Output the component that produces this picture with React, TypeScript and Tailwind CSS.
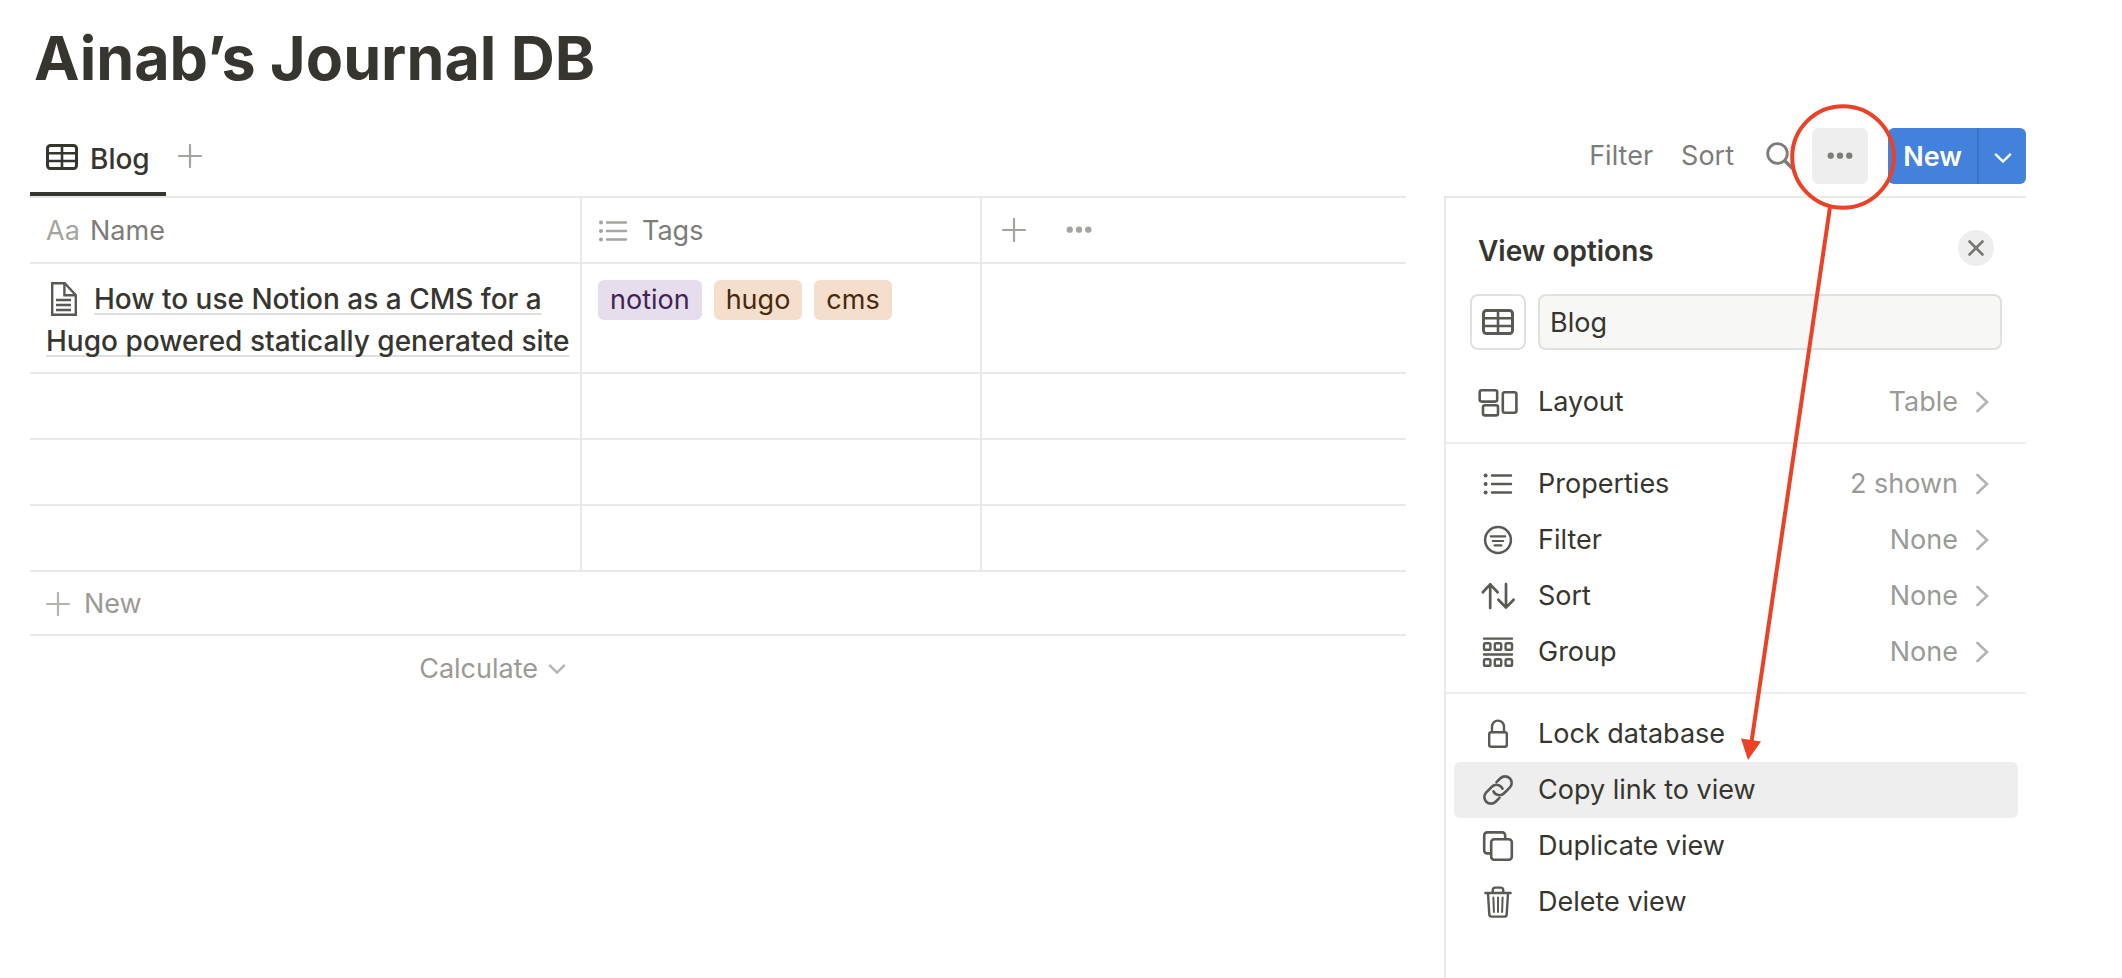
import type { ReactNode } from "react";

type IconProps = { className?: string };

const TableIcon = ({ className = "" }: IconProps) => (
  <svg width="32" height="26" viewBox="0 0 32 26" fill="none" stroke="currentColor" strokeWidth="3" className={`shrink-0 ${className}`} aria-hidden="true">
    <rect x="1.5" y="1.5" width="29" height="23" rx="3" />
    <path d="M1.5 9.3h29M1.5 17h29M16 1.5v23" strokeWidth="2.6" />
  </svg>
);

const PlusIcon = ({ className = "" }: IconProps) => (
  <svg width="24" height="24" viewBox="0 0 24 24" fill="none" stroke="currentColor" strokeWidth="2.2" strokeLinecap="round" className={`shrink-0 ${className}`} aria-hidden="true">
    <path d="M12 1v22M1 12h22" />
  </svg>
);

const ListIcon = ({ className = "" }: IconProps) => (
  <svg width="30" height="22" viewBox="0 0 30 22" fill="none" stroke="currentColor" strokeWidth="2.4" strokeLinecap="round" className={`shrink-0 ${className}`} aria-hidden="true">
    <path d="M9 2.5h19M9 11h19M9 19.5h19" />
    <g fill="currentColor" stroke="none">
      <circle cx="3" cy="2.5" r="2" />
      <circle cx="3" cy="11" r="2" />
      <circle cx="3" cy="19.5" r="2" />
    </g>
  </svg>
);

const DotsIcon = ({ className = "w-[26px]" }: IconProps) => (
  <svg viewBox="0 0 28 8" fill="currentColor" className={`shrink-0 ${className}`} aria-hidden="true">
    <circle cx="4" cy="4" r="3.4" />
    <circle cx="14" cy="4" r="3.4" />
    <circle cx="24" cy="4" r="3.4" />
  </svg>
);

const PageIcon = () => (
  <svg width="28" height="34" viewBox="0 0 28 34" fill="none" stroke="currentColor" strokeWidth="2.4" className="mr-4 ml-1 inline-block align-[-7px] text-[#5a5954]" aria-hidden="true">
    <path d="M2.2 1.2h12.6l11 12v19.6h-23.6z" />
    <path d="M14.4 1.2v12h11.4" />
    <path d="M6 18h15M6 23h15M6 28h15" />
  </svg>
);

const SearchIcon = () => (
  <svg width="30" height="28" viewBox="0 0 30 28" fill="none" stroke="currentColor" strokeWidth="2.8" className="shrink-0" aria-hidden="true">
    <circle cx="11.5" cy="11.5" r="9.8" />
    <path d="M18.5 18.5l8 8" strokeWidth="3.6" />
  </svg>
);

const ChevronDown = ({ className = "" }: IconProps) => (
  <svg width="18" height="12" viewBox="0 0 18 12" fill="none" stroke="currentColor" strokeWidth="2.4" className={`shrink-0 ${className}`} aria-hidden="true">
    <path d="M1.2 1.8L9 9.6l7.8-7.8" />
  </svg>
);

const ChevronRight = () => (
  <svg width="14" height="22" viewBox="0 0 14 22" fill="none" stroke="currentColor" strokeWidth="2.6" strokeLinecap="round" className="shrink-0 text-[#b4b3b0]" aria-hidden="true">
    <path d="M1.5 2l9.5 9-9.5 9" />
  </svg>
);

const CloseIcon = () => (
  <svg width="16" height="16" viewBox="0 0 16 16" fill="none" stroke="currentColor" strokeWidth="2.6" strokeLinecap="round" aria-hidden="true">
    <path d="M1.5 1.5l13 13M14.5 1.5l-13 13" />
  </svg>
);

const Glyph = ({ children }: { children: ReactNode }) => (
  <svg width="40" height="40" viewBox="0 0 40 40" fill="none" stroke="currentColor" strokeWidth="2.4" strokeLinecap="round" strokeLinejoin="round" className="shrink-0 text-[#5a5954]" aria-hidden="true">
    {children}
  </svg>
);

const glyphs = {
  layout: (
    <Glyph>
      <rect x="1.7" y="8.2" width="17.5" height="11.4" rx="2" strokeWidth="2.6" />
      <rect x="5" y="23.2" width="15" height="10.2" rx="2" strokeWidth="2.6" />
      <rect x="24.8" y="10.2" width="13.6" height="20.6" rx="2" strokeWidth="2.6" />
    </Glyph>
  ),
  properties: (
    <Glyph>
      <path d="M14 11.5h19M14 20h19M14 28.5h19" />
      <g fill="currentColor" stroke="none">
        <circle cx="7.6" cy="11.5" r="2" />
        <circle cx="7.6" cy="20" r="2" />
        <circle cx="7.6" cy="28.5" r="2" />
      </g>
    </Glyph>
  ),
  filter: (
    <Glyph>
      <circle cx="20" cy="20" r="12.9" strokeWidth="2.5" />
      <path d="M12.8 16.4h14.4M14.8 21h10.4M16.6 25.4h6.8" strokeWidth="2.1" />
    </Glyph>
  ),
  sort: (
    <Glyph>
      <path d="M12.2 32V8.4M4.8 16.2l7.4-7.8 7.4 7.8M28 8v23.6M20.4 23.8l7.6 7.8 7.6-7.8" strokeWidth="2.7" />
    </Glyph>
  ),
  group: (
    <Glyph>
      <path d="M6 6.6h28M6 22.5h28" />
      <rect x="6" y="11.2" width="6.4" height="6.6" rx="1.4" />
      <rect x="16.8" y="11.2" width="6.4" height="6.6" rx="1.4" />
      <rect x="27.6" y="11.2" width="6.4" height="6.6" rx="1.4" />
      <rect x="6" y="27.2" width="6.4" height="6.6" rx="1.4" />
      <rect x="16.8" y="27.2" width="6.4" height="6.6" rx="1.4" />
      <rect x="27.6" y="27.2" width="6.4" height="6.6" rx="1.4" />
    </Glyph>
  ),
  lock: (
    <Glyph>
      <rect x="11.2" y="18.2" width="17.6" height="14.6" rx="2" />
      <path d="M14 18v-5.4a6 6 0 0 1 12 0V18" />
    </Glyph>
  ),
  link: (
    <Glyph>
      <g transform="rotate(-45 20 20)" strokeWidth="2.6">
        <path d="M15.5 26.6H10a6.6 6.6 0 0 1 0-13.2h8a6.6 6.6 0 0 1 6.2 8.8" />
        <path d="M24.5 13.4H30a6.6 6.6 0 0 1 0 13.2h-8a6.6 6.6 0 0 1-6.2-8.8" />
      </g>
    </Glyph>
  ),
  duplicate: (
    <Glyph>
      <rect x="13.2" y="13.2" width="20.6" height="20.6" rx="3" strokeWidth="2.6" />
      <path d="M12.8 27.4H9.2a3 3 0 0 1-3-3V9.4a3 3 0 0 1 3-3h15a3 3 0 0 1 3 3v3.4" strokeWidth="2.6" />
    </Glyph>
  ),
  trash: (
    <Glyph>
      <path d="M7.4 11h25.2M14.8 10.6V8a2.4 2.4 0 0 1 2.4-2.4h5.6A2.4 2.4 0 0 1 25.2 8v2.6M10 11.4l1.3 21a2.3 2.3 0 0 0 2.3 2.2h12.8a2.3 2.3 0 0 0 2.3-2.2l1.3-21" />
      <path d="M15.4 15.5l.5 14.5M20 15.5v14.5M24.6 15.5l-.5 14.5" strokeWidth="2" />
    </Glyph>
  ),
};

type Item = { label: string; icon: keyof typeof glyphs; value?: string; active?: boolean };

const groups: Item[][] = [
  [{ label: "Layout", icon: "layout", value: "Table" }],
  [
    { label: "Properties", icon: "properties", value: "2 shown" },
    { label: "Filter", icon: "filter", value: "None" },
    { label: "Sort", icon: "sort", value: "None" },
    { label: "Group", icon: "group", value: "None" },
  ],
  [
    { label: "Lock database", icon: "lock" },
    { label: "Copy link to view", icon: "link", active: true },
    { label: "Duplicate view", icon: "duplicate" },
    { label: "Delete view", icon: "trash" },
  ],
];

const tags = [
  { name: "notion", style: "bg-[#e6deed] text-[#412454]" },
  { name: "hugo", style: "bg-[#f5dfcc] text-[#49290e]" },
  { name: "cms", style: "bg-[#f5dfcc] text-[#49290e]" },
];

function MenuItem({ item }: { item: Item }) {
  return (
    <li>
      <button type="button" className={`flex h-14 w-full items-center rounded-md pr-7 pl-6 text-left ${item.active ? "bg-[#eeeeee]" : ""}`}>
        {glyphs[item.icon]}
        <span className="ml-5">{item.label}</span>
        {item.value && (
          <span className="ml-auto flex items-center gap-[18px] text-[#9b9a97]">
            {item.value}
            <ChevronRight />
          </span>
        )}
      </button>
    </li>
  );
}

function Callout() {
  return (
    <svg width="170" height="670" viewBox="0 0 170 670" fill="none" className="pointer-events-none absolute top-[100px] right-[219px]" aria-hidden="true">
      <circle cx="110" cy="57" r="50.8" stroke="#eb4127" strokeWidth="4" />
      <path d="M97 107L18.5 642" stroke="#eb4127" strokeWidth="4" />
      <path d="M8 638.5l20 3L15 660z" fill="#eb4127" />
    </svg>
  );
}

export default function App() {
  return (
    <main className="relative flex min-h-screen flex-col bg-white pr-24 pl-[30px] font-['Inter',sans-serif] text-[27px] leading-[42px] text-[#37352f]">
      <h1 className="pt-5 pl-1 text-[61px] leading-[76px] font-bold">Ainab’s Journal DB</h1>

      <div className="mt-6 flex h-[76px] justify-between">
        <div className="flex">
          <button type="button" className="flex h-full items-start gap-3 border-b-4 border-[#37352f] px-4 pt-[18px] text-[28px] font-medium">
            <TableIcon className="mt-[6px]" />
            Blog
          </button>
          <button type="button" aria-label="Add a view" className="mt-2 ml-3 flex h-14 items-center text-[#a5a4a0]">
            <PlusIcon />
          </button>
        </div>
        <div className="mt-2 flex h-14 items-center text-[#7d7c78]">
          <button type="button">Filter</button>
          <button type="button" className="ml-7">Sort</button>
          <button type="button" aria-label="Search" className="ml-8">
            <SearchIcon />
          </button>
          <button type="button" aria-label="View options" className="ml-4 flex size-14 items-center justify-center rounded-md bg-[#eeeeee]">
            <DotsIcon />
          </button>
          <div className="ml-5 flex h-14 overflow-hidden rounded-md bg-[#4281dc] text-white">
            <button type="button" className="w-[91px] border-r-2 border-[#3a73c4] pt-[2px] font-semibold">New</button>
            <button type="button" aria-label="More ways to add" className="flex w-[47px] items-center justify-center pt-1">
              <ChevronDown />
            </button>
          </div>
        </div>
      </div>

      <div className="flex flex-1 items-stretch gap-[38px]">
        <section className="min-w-0 flex-1">
          <table className="w-full table-fixed border-separate border-spacing-0 border-t-2 border-[#e9e9e7] text-left">
            <colgroup>
              <col className="w-[552px]" />
              <col className="w-[400px]" />
              <col />
            </colgroup>
            <thead className="text-[#7d7c78]">
              <tr className="h-[66px]">
                <th scope="col" className="border-r-2 border-b-2 border-[#e9e9e7] px-4 pt-[2px] font-normal">
                  <span className="flex items-center gap-3">
                    <span className="w-8 text-[#a5a4a0]" aria-hidden="true">Aa</span>
                    Name
                  </span>
                </th>
                <th scope="col" className="border-r-2 border-b-2 border-[#e9e9e7] px-4 pt-[2px] font-normal">
                  <span className="flex items-center gap-[14px]">
                    <ListIcon className="text-[#a5a4a0]" />
                    Tags
                  </span>
                </th>
                <td className="border-b-2 border-[#e9e9e7] px-5">
                  <span className="flex items-center gap-10 text-[#a5a4a0]">
                    <button type="button" aria-label="Add a property"><PlusIcon /></button>
                    <button type="button" aria-label="Property options"><DotsIcon /></button>
                  </span>
                </td>
              </tr>
            </thead>
            <tbody>
              <tr className="h-[110px]">
                <td className="border-r-2 border-b-2 border-[#e9e9e7] pt-[14px] pb-2 pl-4 align-top text-[28px] font-medium">
                  <PageIcon />
                  <a href="#page" className="underline decoration-[#dfdfdd] decoration-2 underline-offset-4 [text-decoration-skip-ink:none]">
                    How to use Notion as a CMS for a Hugo powered statically generated site
                  </a>
                </td>
                <td className="border-r-2 border-b-2 border-[#e9e9e7] px-4 py-4 align-top">
                  <ul className="flex gap-3">
                    {tags.map((tag) => (
                      <li key={tag.name} className={`rounded-md px-3 leading-10 ${tag.style}`}>{tag.name}</li>
                    ))}
                  </ul>
                </td>
                <td className="border-b-2 border-[#e9e9e7]" />
              </tr>
              {[0, 1, 2].map((row) => (
                <tr key={row} className="h-[66px]">
                  <td className="border-r-2 border-b-2 border-[#e9e9e7]" />
                  <td className="border-r-2 border-b-2 border-[#e9e9e7]" />
                  <td className="border-b-2 border-[#e9e9e7]" />
                </tr>
              ))}
            </tbody>
          </table>
          <button type="button" className="flex h-16 w-full items-center gap-[14px] border-b-2 border-[#e9e9e7] px-4 pt-[2px] text-[#9b9a97]">
            <PlusIcon className="text-[#b4b3b0]" />
            New
          </button>
          <div className="flex w-[552px] justify-end pr-4">
            <button type="button" className="flex h-16 items-center gap-[10px] pt-[2px] text-[#9b9a97]">
              Calculate
              <ChevronDown className="text-[#b4b3b0]" />
            </button>
          </div>
        </section>

        <aside aria-label="View options" className="w-[582px] shrink-0 border-t-2 border-l-2 border-[#e9e9e7]">
          <header className="flex items-start justify-between pt-8 pr-8 pl-8">
            <h2 className="text-[28px] font-semibold">View options</h2>
            <button type="button" aria-label="Close" className="flex size-9 items-center justify-center rounded-full bg-[#eeeeee] text-[#787774]">
              <CloseIcon />
            </button>
          </header>
          <div className="mt-[22px] flex gap-3 pr-6 pl-6">
            <button type="button" aria-label="Change view icon" className="flex size-14 shrink-0 items-center justify-center rounded-lg border-2 border-[#e0e0de] text-[#5a5954]">
              <TableIcon />
            </button>
            <input aria-label="View name" defaultValue="Blog" className="h-14 min-w-0 flex-1 rounded-lg border-2 border-[#e0e0de] bg-[#f7f7f5] px-[10px]" />
          </div>
          <div className="pt-3">
            {groups.map((group, index) => (
              <ul key={index} className={`px-2 py-3 ${index > 0 ? "border-t-2 border-[#ededeb]" : ""}`}>
                {group.map((item) => (
                  <MenuItem key={item.label} item={item} />
                ))}
              </ul>
            ))}
          </div>
        </aside>
      </div>

      <Callout />
    </main>
  );
}
